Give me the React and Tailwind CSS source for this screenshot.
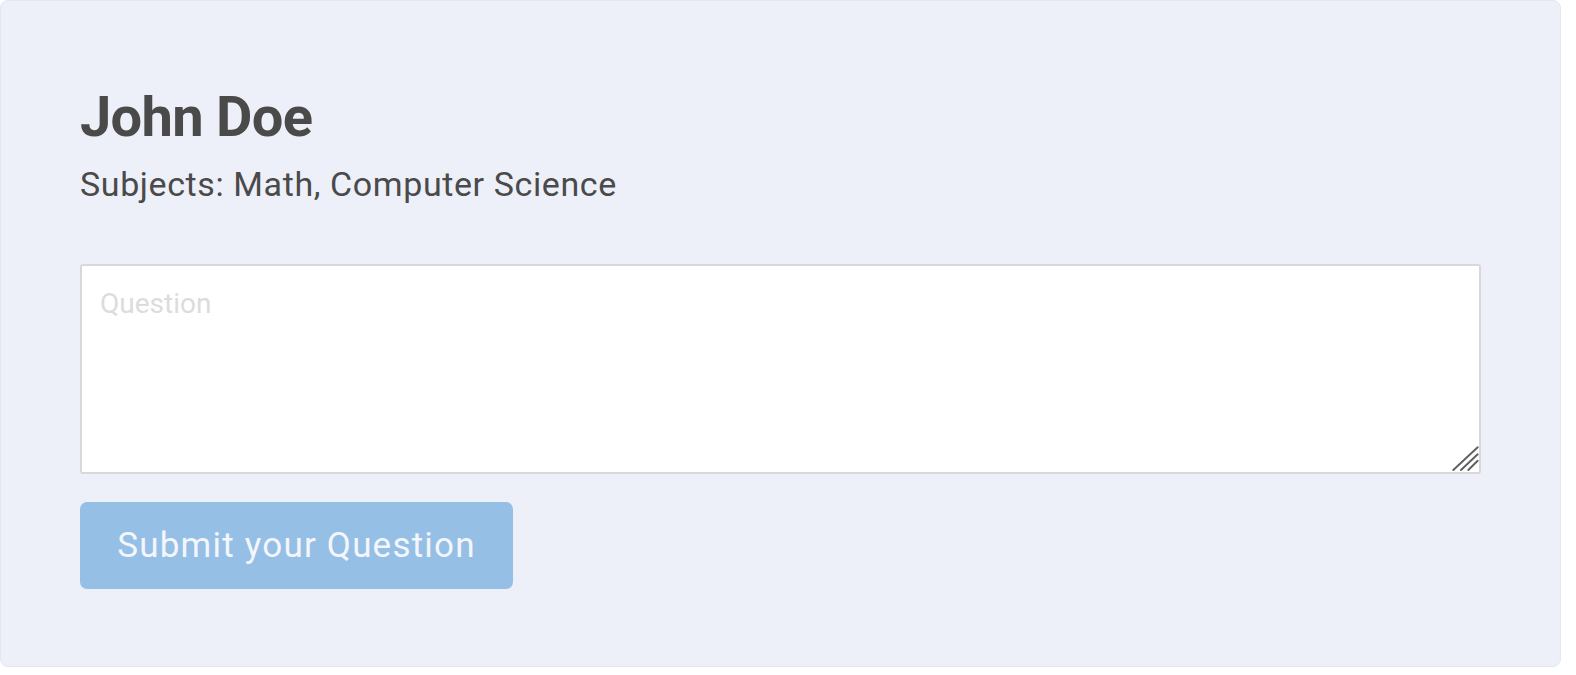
export default function App() {
  return (
    <div className="min-h-screen bg-white" style={{ fontFamily: 'Roboto, "Noto Sans", sans-serif' }}>
      <div className="w-[1561px] h-[667px] rounded-lg border border-[#e4e7ef] bg-[#edf0f9] px-[79px] pt-[83px]">
        <h1 className="text-[56px] leading-[1.2] font-bold tracking-[-0.7px] text-[#4a4a4a]">John Doe</h1>
        <p className="mt-[13px] text-[34px] leading-[1.2] tracking-[0.6px] text-[#4a4a4a]">
          Subjects: Math, Computer Science
        </p>
        <div className="relative mt-[59px] w-[1401px]">
          <textarea
            className="block w-full h-[210px] resize-none rounded-[3px] border-2 border-[#d8d8d8] bg-white px-[18px] py-[17px] text-[28px] leading-[1.5] text-[#4a4a4a] outline-none placeholder:text-[#dcdcdc]"
            placeholder="Question"
          />
          {/* resize grip */}
          <svg className="pointer-events-none absolute right-[1px] bottom-[2px]" width="28" height="26" viewBox="0 0 28 26">
            <g stroke="#5f5f5f" strokeWidth="1.9" strokeLinecap="round">
              <line x1="1.3" y1="24" x2="25.7" y2="1.3" />
              <line x1="9" y1="24" x2="25.7" y2="8.3" />
              <line x1="16.3" y1="24" x2="25.7" y2="14.7" />
            </g>
          </svg>
        </div>
        <button className="mt-[28px] flex h-[87px] w-[433px] items-center justify-center rounded-[7px] bg-[#96bfe5] text-[35px] leading-none tracking-[1.2px] text-[#f3f6fc]">
          Submit your Question
        </button>
      </div>
    </div>
  );
}
